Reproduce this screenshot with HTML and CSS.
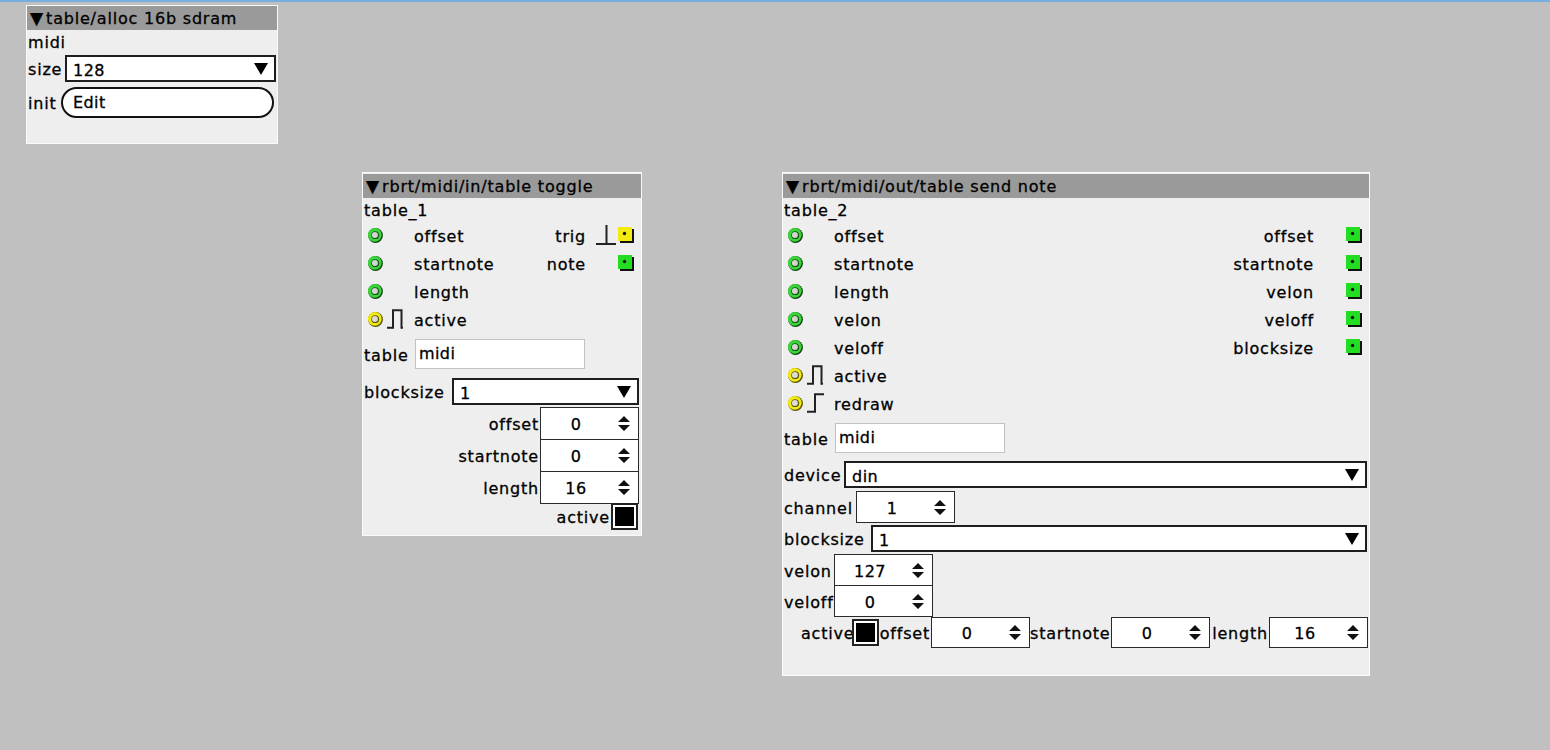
FILE: index.html
```html
<!DOCTYPE html>
<html>
<head>
<meta charset="utf-8">
<title>patch</title>
<link rel="stylesheet" href="styles.css">
</head>
<body>
<div class="topline"></div>

<!-- object 1 -->
<div class="obj obj-alloc">
  <div class="title"><span class="tri">▼</span>table/alloc 16b sdram</div>
  <div class="iname iname-alloc">midi</div>
  <div class="prow prow-size">
    <span class="lbl lbl-size">size</span>
    <div class="dropdown"><span class="dd-val">128</span><svg class="dd-arrow" viewBox="0 0 14 12" width="14" height="12"><polygon points="0,0 14,0 7,12" fill="#000"/></svg></div>
  </div>
  <div class="prow prow-init">
    <span class="lbl lbl-init">init</span>
    <div class="pill">Edit</div>
  </div>
</div>

<!-- object 2 -->
<div class="obj obj-in">
  <div class="title"><span class="tri">▼</span>rbrt/midi/in/table toggle</div>
  <div class="iname">table_1</div>
  <div class="io">
    <div class="io-col io-in">
      <div class="io-row">
        <svg class="inlet" viewBox="0 0 16 16" width="16" height="16"><circle cx="8.5" cy="8.5" r="7.4" fill="#0f420f"/><circle cx="7.8" cy="7.8" r="6.9" fill="#39d639"/><circle cx="8.2" cy="8.2" r="3.9" fill="#1a521a"/><circle cx="7.9" cy="7.9" r="3" fill="#cfd8cf"/></svg>
        <span class="io-ico"></span><span class="io-lbl">offset</span>
      </div>
      <div class="io-row">
        <svg class="inlet" viewBox="0 0 16 16" width="16" height="16"><circle cx="8.5" cy="8.5" r="7.4" fill="#0f420f"/><circle cx="7.8" cy="7.8" r="6.9" fill="#39d639"/><circle cx="8.2" cy="8.2" r="3.9" fill="#1a521a"/><circle cx="7.9" cy="7.9" r="3" fill="#cfd8cf"/></svg>
        <span class="io-ico"></span><span class="io-lbl">startnote</span>
      </div>
      <div class="io-row">
        <svg class="inlet" viewBox="0 0 16 16" width="16" height="16"><circle cx="8.5" cy="8.5" r="7.4" fill="#0f420f"/><circle cx="7.8" cy="7.8" r="6.9" fill="#39d639"/><circle cx="8.2" cy="8.2" r="3.9" fill="#1a521a"/><circle cx="7.9" cy="7.9" r="3" fill="#cfd8cf"/></svg>
        <span class="io-ico"></span><span class="io-lbl">length</span>
      </div>
      <div class="io-row">
        <svg class="inlet" viewBox="0 0 16 16" width="16" height="16"><circle cx="8.5" cy="8.5" r="7.4" fill="#555000"/><circle cx="7.8" cy="7.8" r="6.9" fill="#f2ea10"/><circle cx="8.2" cy="8.2" r="3.9" fill="#5a5510"/><circle cx="7.9" cy="7.9" r="3" fill="#dedcd0"/></svg>
        <span class="io-ico"><svg viewBox="0 0 20 20" width="20" height="20"><path d="M0 18.8H6V1.2H14.5V18.8H16" fill="none" stroke="#222" stroke-width="2"/></svg></span><span class="io-lbl">active</span>
      </div>
    </div>
    <div class="io-col io-out">
      <div class="io-row">
        <span class="io-lbl">trig</span>
        <span class="io-ico"><svg viewBox="0 0 20 20" width="20" height="20"><path d="M0 19H20M10.5 19V0" fill="none" stroke="#222" stroke-width="2"/></svg></span>
        <svg class="outlet" viewBox="0 0 16 16" width="16" height="16"><rect x="2" y="2" width="14" height="14" fill="#111"/><rect x="0" y="0" width="14" height="14" fill="#f2ea10"/><circle cx="6.5" cy="6.5" r="1.7" fill="#111"/></svg>
      </div>
      <div class="io-row">
        <span class="io-lbl">note</span>
        <span class="io-ico"></span>
        <svg class="outlet" viewBox="0 0 16 16" width="16" height="16"><rect x="2" y="2" width="14" height="14" fill="#111"/><rect x="0" y="0" width="14" height="14" fill="#22dd22"/><circle cx="6.5" cy="6.5" r="1.7" fill="#111"/></svg>
      </div>
    </div>
  </div>
  <div class="prow prow-table">
    <span class="lbl lbl-table">table</span>
    <div class="field">midi</div>
  </div>
  <div class="prow prow-bs">
    <span class="lbl lbl-blocksize">blocksize</span>
    <div class="dropdown"><span class="dd-val">1</span><svg class="dd-arrow" viewBox="0 0 14 12" width="14" height="12"><polygon points="0,0 14,0 7,12" fill="#000"/></svg></div>
  </div>
  <div class="numrows">
    <div class="nrow">
      <span class="nlbl">offset</span>
      <div class="num"><span class="num-val">0</span><svg class="spin" viewBox="0 0 12 15" width="12" height="15"><path d="M0 6L6 0L12 6ZM0 9H12L6 15Z" fill="#111"/></svg></div>
    </div>
    <div class="nrow">
      <span class="nlbl">startnote</span>
      <div class="num"><span class="num-val">0</span><svg class="spin" viewBox="0 0 12 15" width="12" height="15"><path d="M0 6L6 0L12 6ZM0 9H12L6 15Z" fill="#111"/></svg></div>
    </div>
    <div class="nrow">
      <span class="nlbl">length</span>
      <div class="num"><span class="num-val">16</span><svg class="spin" viewBox="0 0 12 15" width="12" height="15"><path d="M0 6L6 0L12 6ZM0 9H12L6 15Z" fill="#111"/></svg></div>
    </div>
    <div class="nrow nrow-check">
      <span class="nlbl">active</span>
      <div class="check"><div class="check-fill"></div></div>
    </div>
  </div>
</div>

<!-- object 3 -->
<div class="obj obj-out">
  <div class="title"><span class="tri">▼</span>rbrt/midi/out/table send note</div>
  <div class="iname">table_2</div>
  <div class="io">
    <div class="io-col io-in">
      <div class="io-row">
        <svg class="inlet" viewBox="0 0 16 16" width="16" height="16"><circle cx="8.5" cy="8.5" r="7.4" fill="#0f420f"/><circle cx="7.8" cy="7.8" r="6.9" fill="#39d639"/><circle cx="8.2" cy="8.2" r="3.9" fill="#1a521a"/><circle cx="7.9" cy="7.9" r="3" fill="#cfd8cf"/></svg>
        <span class="io-ico"></span><span class="io-lbl">offset</span>
      </div>
      <div class="io-row">
        <svg class="inlet" viewBox="0 0 16 16" width="16" height="16"><circle cx="8.5" cy="8.5" r="7.4" fill="#0f420f"/><circle cx="7.8" cy="7.8" r="6.9" fill="#39d639"/><circle cx="8.2" cy="8.2" r="3.9" fill="#1a521a"/><circle cx="7.9" cy="7.9" r="3" fill="#cfd8cf"/></svg>
        <span class="io-ico"></span><span class="io-lbl">startnote</span>
      </div>
      <div class="io-row">
        <svg class="inlet" viewBox="0 0 16 16" width="16" height="16"><circle cx="8.5" cy="8.5" r="7.4" fill="#0f420f"/><circle cx="7.8" cy="7.8" r="6.9" fill="#39d639"/><circle cx="8.2" cy="8.2" r="3.9" fill="#1a521a"/><circle cx="7.9" cy="7.9" r="3" fill="#cfd8cf"/></svg>
        <span class="io-ico"></span><span class="io-lbl">length</span>
      </div>
      <div class="io-row">
        <svg class="inlet" viewBox="0 0 16 16" width="16" height="16"><circle cx="8.5" cy="8.5" r="7.4" fill="#0f420f"/><circle cx="7.8" cy="7.8" r="6.9" fill="#39d639"/><circle cx="8.2" cy="8.2" r="3.9" fill="#1a521a"/><circle cx="7.9" cy="7.9" r="3" fill="#cfd8cf"/></svg>
        <span class="io-ico"></span><span class="io-lbl">velon</span>
      </div>
      <div class="io-row">
        <svg class="inlet" viewBox="0 0 16 16" width="16" height="16"><circle cx="8.5" cy="8.5" r="7.4" fill="#0f420f"/><circle cx="7.8" cy="7.8" r="6.9" fill="#39d639"/><circle cx="8.2" cy="8.2" r="3.9" fill="#1a521a"/><circle cx="7.9" cy="7.9" r="3" fill="#cfd8cf"/></svg>
        <span class="io-ico"></span><span class="io-lbl">veloff</span>
      </div>
      <div class="io-row">
        <svg class="inlet" viewBox="0 0 16 16" width="16" height="16"><circle cx="8.5" cy="8.5" r="7.4" fill="#555000"/><circle cx="7.8" cy="7.8" r="6.9" fill="#f2ea10"/><circle cx="8.2" cy="8.2" r="3.9" fill="#5a5510"/><circle cx="7.9" cy="7.9" r="3" fill="#dedcd0"/></svg>
        <span class="io-ico"><svg viewBox="0 0 20 20" width="20" height="20"><path d="M0 18.8H6V1.2H14.5V18.8H16" fill="none" stroke="#222" stroke-width="2"/></svg></span><span class="io-lbl">active</span>
      </div>
      <div class="io-row">
        <svg class="inlet" viewBox="0 0 16 16" width="16" height="16"><circle cx="8.5" cy="8.5" r="7.4" fill="#555000"/><circle cx="7.8" cy="7.8" r="6.9" fill="#f2ea10"/><circle cx="8.2" cy="8.2" r="3.9" fill="#5a5510"/><circle cx="7.9" cy="7.9" r="3" fill="#dedcd0"/></svg>
        <span class="io-ico"><svg viewBox="0 0 20 20" width="20" height="20"><path d="M0 18.8H8V1.2H17" fill="none" stroke="#222" stroke-width="2"/></svg></span><span class="io-lbl">redraw</span>
      </div>
    </div>
    <div class="io-col io-out">
      <div class="io-row">
        <span class="io-lbl">offset</span><span class="io-ico"></span>
        <svg class="outlet" viewBox="0 0 16 16" width="16" height="16"><rect x="2" y="2" width="14" height="14" fill="#111"/><rect x="0" y="0" width="14" height="14" fill="#22dd22"/><circle cx="6.5" cy="6.5" r="1.7" fill="#111"/></svg>
      </div>
      <div class="io-row">
        <span class="io-lbl">startnote</span><span class="io-ico"></span>
        <svg class="outlet" viewBox="0 0 16 16" width="16" height="16"><rect x="2" y="2" width="14" height="14" fill="#111"/><rect x="0" y="0" width="14" height="14" fill="#22dd22"/><circle cx="6.5" cy="6.5" r="1.7" fill="#111"/></svg>
      </div>
      <div class="io-row">
        <span class="io-lbl">velon</span><span class="io-ico"></span>
        <svg class="outlet" viewBox="0 0 16 16" width="16" height="16"><rect x="2" y="2" width="14" height="14" fill="#111"/><rect x="0" y="0" width="14" height="14" fill="#22dd22"/><circle cx="6.5" cy="6.5" r="1.7" fill="#111"/></svg>
      </div>
      <div class="io-row">
        <span class="io-lbl">veloff</span><span class="io-ico"></span>
        <svg class="outlet" viewBox="0 0 16 16" width="16" height="16"><rect x="2" y="2" width="14" height="14" fill="#111"/><rect x="0" y="0" width="14" height="14" fill="#22dd22"/><circle cx="6.5" cy="6.5" r="1.7" fill="#111"/></svg>
      </div>
      <div class="io-row">
        <span class="io-lbl">blocksize</span><span class="io-ico"></span>
        <svg class="outlet" viewBox="0 0 16 16" width="16" height="16"><rect x="2" y="2" width="14" height="14" fill="#111"/><rect x="0" y="0" width="14" height="14" fill="#22dd22"/><circle cx="6.5" cy="6.5" r="1.7" fill="#111"/></svg>
      </div>
    </div>
  </div>
  <div class="prow prow-table">
    <span class="lbl lbl-table">table</span>
    <div class="field">midi</div>
  </div>
  <div class="prow prow-device">
    <span class="lbl lbl-device">device</span>
    <div class="dropdown"><span class="dd-val">din</span><svg class="dd-arrow" viewBox="0 0 14 12" width="14" height="12"><polygon points="0,0 14,0 7,12" fill="#000"/></svg></div>
  </div>
  <div class="prow prow-channel">
    <span class="lbl lbl-channel">channel</span>
    <div class="num num-32"><span class="num-val">1</span><svg class="spin" viewBox="0 0 12 15" width="12" height="15"><path d="M0 6L6 0L12 6ZM0 9H12L6 15Z" fill="#111"/></svg></div>
  </div>
  <div class="prow prow-bs3">
    <span class="lbl lbl-blocksize3">blocksize</span>
    <div class="dropdown"><span class="dd-val">1</span><svg class="dd-arrow" viewBox="0 0 14 12" width="14" height="12"><polygon points="0,0 14,0 7,12" fill="#000"/></svg></div>
  </div>
  <div class="prow prow-velon">
    <span class="lbl lbl-vel">velon</span>
    <div class="num num-32"><span class="num-val">127</span><svg class="spin" viewBox="0 0 12 15" width="12" height="15"><path d="M0 6L6 0L12 6ZM0 9H12L6 15Z" fill="#111"/></svg></div>
  </div>
  <div class="prow prow-veloff">
    <span class="lbl lbl-vel">veloff</span>
    <div class="num num-32"><span class="num-val">0</span><svg class="spin" viewBox="0 0 12 15" width="12" height="15"><path d="M0 6L6 0L12 6ZM0 9H12L6 15Z" fill="#111"/></svg></div>
  </div>
  <div class="brow">
    <span class="blbl blbl-active">active</span>
    <div class="check"><div class="check-fill"></div></div>
    <span class="blbl blbl-offset">offset</span>
    <div class="num num-sm"><span class="num-val">0</span><svg class="spin" viewBox="0 0 12 15" width="12" height="15"><path d="M0 6L6 0L12 6ZM0 9H12L6 15Z" fill="#111"/></svg></div>
    <span class="blbl blbl-startnote">startnote</span>
    <div class="num num-sm"><span class="num-val">0</span><svg class="spin" viewBox="0 0 12 15" width="12" height="15"><path d="M0 6L6 0L12 6ZM0 9H12L6 15Z" fill="#111"/></svg></div>
    <span class="blbl blbl-length">length</span>
    <div class="num num-sm"><span class="num-val">16</span><svg class="spin" viewBox="0 0 12 15" width="12" height="15"><path d="M0 6L6 0L12 6ZM0 9H12L6 15Z" fill="#111"/></svg></div>
  </div>
</div>
</body>
</html>
```

FILE: styles.css
```css
* { box-sizing: border-box; }
html, body { margin: 0; padding: 0; }
body {
  position: relative;
  width: 1550px;
  height: 750px;
  overflow: hidden;
  background: #c0c0c0;
  font-family: "DejaVu Sans", "Liberation Sans", sans-serif;
  font-size: 16px;
  letter-spacing: 0.8px;
  color: #000;
  -webkit-text-stroke: 0.3px #000;
}
.topline { height: 2px; background: #77aee0; }

/* objects on the patch canvas */
.obj {
  position: absolute;
  display: flex;
  flex-direction: column;
  background: #eeeeee;
  border: 1px solid #fafafa;
}
.obj-alloc { left: 26px; top: 5px; width: 252px; height: 139px; }
.obj-in { left: 362px; top: 172px; width: 280px; height: 364px; padding-top: 1px; }
.obj-out { left: 782px; top: 172px; width: 588px; height: 504px; padding-top: 1px; }

.title {
  flex: none;
  height: 24px;
  line-height: 25px;
  background: #9a9a9a;
  padding-left: 3px;
  white-space: nowrap;
  overflow: hidden;
}
.tri { display: inline-block; font-size: 17px; margin-right: 3px; letter-spacing: 0; }
.iname { flex: none; height: 23px; line-height: 25px; padding-left: 1px; }
.iname-alloc { height: 24px; }

/* inlets / outlets */
.io { display: flex; justify-content: space-between; flex: none; }
.io-col { display: flex; flex-direction: column; }
.io-out { align-items: flex-end; }
.io-row { height: 28px; display: flex; align-items: center; }
.io-in .io-row { padding-left: 4px; }
.io-out .io-row { padding-right: 7px; }
.inlet { flex: none; display: block; }
.outlet { flex: none; display: block; margin-left: 2px; }
.io-ico { flex: none; width: 20px; height: 20px; display: block; }
.io-ico svg { display: block; }
.io-in .io-ico { margin-left: 4px; margin-right: 7px; }
.io-out .io-ico { margin-left: 10px; }
.io-lbl { padding-top: 2px; white-space: nowrap; }

/* parameter rows */
.prow { display: flex; align-items: center; padding-left: 1px; padding-right: 2px; flex: none; }
.prow-size { margin-top: 1px; padding-right: 1px; }
.prow-init { margin-top: 5px; padding-right: 3px; }
.prow-table { margin-top: 6px; }
.prow-bs { margin-top: 9px; }
.prow-device { margin-top: 8px; }
.prow-channel { margin-top: 3px; }
.prow-bs3 { margin-top: 2px; }
.prow-velon { margin-top: 2px; }
.prow-veloff { margin-top: -1px; }
.lbl { flex: none; white-space: nowrap; padding-top: 2px; }
.lbl-size { width: 37px; }
.lbl-init { width: 33px; }
.lbl-table { width: 51px; }
.lbl-blocksize { width: 88px; }
.lbl-device { width: 60px; }
.lbl-channel { width: 72px; }
.lbl-blocksize3 { width: 87px; }
.lbl-vel { width: 50px; }

.dropdown {
  flex: 1;
  height: 27px;
  display: flex;
  align-items: center;
  justify-content: space-between;
  background: #fff;
  border: 2px solid #1e1e1e;
  padding: 0 6px 0 6px;
}
.dd-val { padding-top: 4px; letter-spacing: 0.5px; }
.dd-arrow { display: block; flex: none; margin-top: 1px; }

.pill {
  flex: 1;
  height: 31px;
  line-height: 27px;
  background: #fff;
  border: 2px solid #111;
  border-radius: 16px;
  padding-left: 10px;
  letter-spacing: 0.4px;
}

.field {
  width: 170px;
  height: 30px;
  line-height: 27px;
  background: #fff;
  border: 1px solid #c2c2c2;
  padding-left: 3px;
  letter-spacing: 0.4px;
}

/* number boxes */
.numrows {
  display: flex;
  flex-direction: column;
  align-items: flex-end;
  padding-right: 2px;
  margin-top: 2px;
}
.nrow { display: flex; align-items: center; }
.nrow + .nrow { margin-top: -1px; }
.nrow-check { padding-right: 1px; }
.nlbl { white-space: nowrap; padding-top: 2px; padding-right: 1px; }

.num {
  flex: none;
  width: 99px;
  height: 33px;
  display: flex;
  align-items: center;
  background: #fff;
  border: 1px solid #2a2a2a;
}
.num-32 { height: 32px; }
.num-sm { height: 31px; }
.num-val { width: 70px; text-align: center; padding-top: 2px; letter-spacing: 0.5px; }
.spin { display: block; flex: none; margin-left: 7px; }

.check {
  flex: none;
  width: 27px;
  height: 27px;
  border: 2px solid #222;
  padding: 2px;
  background: #fff;
}
.check-fill { width: 100%; height: 100%; background: #000; }

/* bottom row of send note */
.brow {
  display: flex;
  align-items: center;
  justify-content: flex-end;
  padding-right: 1px;
  margin-top: 0;
}
.blbl { flex: none; white-space: nowrap; text-align: right; padding-right: 1px; padding-top: 2px; }
.blbl-active { width: 51px; }
.blbl-offset { width: 52px; }
.blbl-startnote { width: 81px; }
.blbl-length { width: 59px; }
```
